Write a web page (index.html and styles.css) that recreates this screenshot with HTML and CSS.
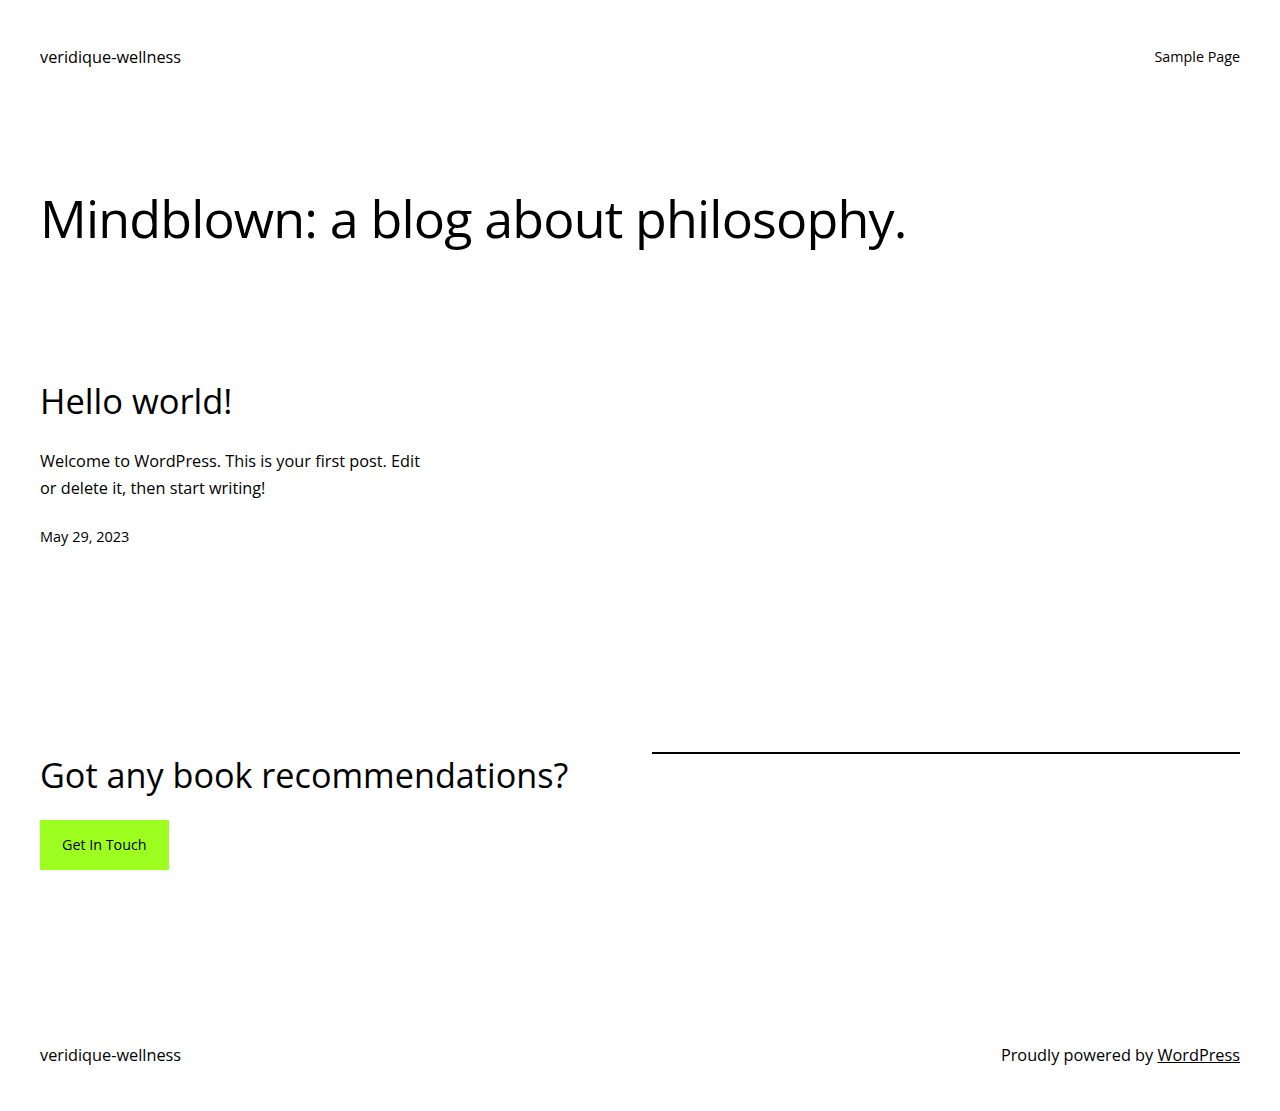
FILE: index.html
```html
<!DOCTYPE html>
<html lang="en">
<head>
<meta charset="utf-8">
<title>veridique-wellness</title>
<link rel="stylesheet" href="styles.css">
</head>
<body>
<header class="site-header">
  <a class="site-title" href="#">veridique-wellness</a>
  <nav class="site-nav"><a href="#">Sample Page</a></nav>
</header>
<main class="site-main">
  <h1 class="page-title">Mindblown: a blog about philosophy.</h1>
  <div class="post-grid">
    <article class="post">
      <h2 class="post-title">Hello world!</h2>
      <p class="post-excerpt">Welcome to WordPress. This is your first post. Edit or delete it, then start writing!</p>
      <div class="post-date">May 29, 2023</div>
    </article>
  </div>
  <section class="cta">
    <div class="cta-left">
      <h2 class="cta-title">Got any book recommendations?</h2>
      <a class="cta-button" href="#">Get In Touch</a>
    </div>
    <div class="cta-right">
      <hr class="cta-sep">
    </div>
  </section>
</main>
<footer class="site-footer">
  <span class="footer-title">veridique-wellness</span>
  <span class="footer-credit">Proudly powered by <a href="#">WordPress</a></span>
</footer>
</body>
</html>
```
FILE: styles.css
```css
html, body { margin: 0; padding: 0; }
body {
  font-family: "Open Sans", "Noto Sans", sans-serif;
  color: #000;
  background: #fff;
  font-size: 16.3px;
  line-height: 1.6;
}
a { color: inherit; text-decoration: none; }

.site-header {
  display: flex;
  justify-content: space-between;
  align-items: center;
  padding: 44px 40px 0;
}
.site-title { font-size: 16.3px; }
.site-nav { font-size: 14.3px; }

.site-main { padding: 0 40px; }
.page-title {
  margin: 117px 0 0;
  font-weight: 400;
  font-size: 52px;
  line-height: 1.2;
  letter-spacing: -0.85px;
}
.post-grid {
  display: grid;
  grid-template-columns: repeat(3, 1fr);
  gap: 24px;
  margin-top: 131px;
}
.post-title {
  margin: 0;
  font-weight: 400;
  font-size: 34.5px;
  line-height: 1.2;
}
.post-excerpt {
  margin: 26px 0 0;
  font-size: 16.3px;
  line-height: 27px;
}
.post-date {
  margin-top: 23px;
  font-size: 14.5px;
}

.cta {
  display: grid;
  grid-template-columns: 1fr 1fr;
  gap: 24px;
  margin-top: 204px;
}
.cta-title {
  margin: 2px 0 0;
  font-weight: 400;
  font-size: 34.2px;
  line-height: 1.2;
}
.cta-button {
  display: inline-block;
  margin-top: 25px;
  background: #9dff20;
  padding: 13px 22px 14px;
  font-size: 14.3px;
  line-height: 23px;
}
.cta-sep {
  margin: 0;
  border: 0;
  border-top: 2px solid #000;
}

.site-footer {
  display: flex;
  justify-content: space-between;
  align-items: center;
  padding: 172px 40px 40px;
  font-size: 16.3px;
}
.footer-credit a { text-decoration: underline; }
```
